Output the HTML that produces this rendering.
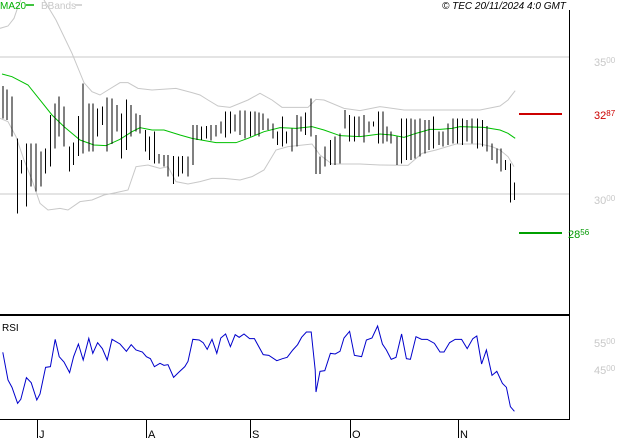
<!DOCTYPE html>
<html><head><style>
body{margin:0;background:#fff;width:627px;height:440px;overflow:hidden;font-family:"Liberation Sans",sans-serif}
svg{display:block}
</style></head><body>
<svg width="627" height="440" viewBox="0 0 627 440">
<rect width="627" height="440" fill="#fff"/>
<line x1="0" y1="57" x2="569" y2="57" stroke="#c8c8c8"/>
<line x1="0" y1="194" x2="569" y2="194" stroke="#c8c8c8"/>
<g transform="scale(0.4,0.33333)" fill="none">
<polyline vector-effect="non-scaling-stroke" stroke="#c8c8c8" points="0,85 20,78 35,55 45,20 52,0"/>
<polyline vector-effect="non-scaling-stroke" stroke="#c8c8c8" points="110,0 140,60 180,160 210,248 230,275 250,285 270,270 300,248 320,248 345,265 380,270 440,265 480,278 500,285 520,300 545,318 575,322 620,300 650,280 680,300 705,322 770,322 790,298 810,300 860,325 900,332 950,320 1010,330 1070,330 1130,330 1200,330 1250,318 1270,300 1288,272"/>
<polyline vector-effect="non-scaling-stroke" stroke="#c8c8c8" points="0,355 20,365 40,410 60,480 80,540 100,610 120,630 150,625 170,630 200,605 230,600 260,585 290,578 320,570 340,500 370,495 400,505 420,500 440,545 470,552 500,545 530,535 560,535 600,540 630,530 660,510 690,450 720,440 780,432 800,465 830,492 900,492 950,495 1020,496 1055,460 1090,450 1140,432 1200,432 1230,440 1250,450 1270,470 1285,500"/>
<polyline vector-effect="non-scaling-stroke" stroke="#00c000" points="5,222 30,230 70,255 100,300 130,345 160,380 200,420 235,435 265,437 300,418 330,395 350,383 380,390 410,390 450,405 480,415 540,428 590,428 620,415 660,395 700,383 740,385 780,380 810,390 850,407 900,410 950,402 980,405 1010,412 1040,400 1075,388 1100,388 1130,385 1150,380 1210,382 1250,390 1270,400 1288,415"/>
<path vector-effect="non-scaling-stroke" shape-rendering="crispEdges" stroke="#000" d="M8 258V355M18 268V360M30 290V410M44 415V640M54 480V520M66 430V620M78 430V560M90 430V575M102 455V560M114 445V520M126 345V500M138 310V445M148 290V410M160 320V440M174 440V515M184 428V495M196 348V468M208 250V460M222 310V455M232 310V455M244 325V410M256 320V375M268 292V455M280 295V432M292 315V395M304 340V475M316 298V450M328 315V410M340 340V395M350 345V400M364 390V455M374 410V480M386 395V490M398 462V490M410 465V500M420 465V530M434 468V552M446 470V530M456 468V520M470 470V530M482 375V495M492 375V420M504 380V420M516 378V415M528 375V422M540 375V410M552 365V400M564 335V412M576 335V400M588 343V395M600 332V405M612 332V415M626 335V410M638 335V405M648 338V410M658 340V390M670 355V390M682 370V415M694 395V435M706 350V440M716 395V430M730 385V455M742 345V440M752 350V395M764 338V405M778 296V410M790 405V522M800 470V522M812 440V500M826 420V495M838 410V495M850 400V490M862 330V385M874 345V425M886 350V425M898 350V410M910 345V428M922 365V398M934 365V380M946 335V430M958 335V430M968 380V425M978 395V430M992 410V495M1004 355V490M1016 355V480M1028 355V480M1038 358V475M1050 355V470M1062 360V460M1072 360V450M1084 350V445M1098 395V435M1108 395V440M1120 370V435M1132 355V430M1144 355V430M1156 355V435M1168 360V425M1180 355V430M1194 355V445M1206 360V440M1218 378V455M1230 430V480M1242 445V490M1252 445V515M1264 480V510M1276 490V608M1286 548V600"/>
</g>
<line x1="519" y1="114" x2="562" y2="114" stroke="#cc0000" stroke-width="2"/>
<line x1="519" y1="233" x2="562" y2="233" stroke="#00a000" stroke-width="2"/>
<line x1="569.5" y1="10" x2="569.5" y2="420" stroke="#000"/>
<line x1="0" y1="315" x2="569" y2="315" stroke="#000" stroke-width="2"/>
<line x1="0" y1="419.5" x2="570" y2="419.5" stroke="#000"/>
<g transform="translate(0,300) scale(0.4,0.33333)" fill="none">
<polyline vector-effect="non-scaling-stroke" stroke="#0000cc" points="7,157 20,240 30,262 44,310 52,298 66,233 78,248 92,300 100,282 114,202 126,200 138,118 148,170 160,186 174,218 184,170 196,132 208,180 222,115 232,160 244,128 256,146 268,180 280,118 300,132 316,154 328,134 340,150 356,156 366,170 376,176 386,200 400,190 410,196 420,194 434,232 446,218 462,200 470,184 482,118 498,120 508,128 518,148 530,118 542,160 552,114 564,102 576,140 588,104 598,112 610,102 624,116 636,116 658,164 672,166 692,182 706,176 718,172 732,150 744,134 754,112 766,96 778,96 788,210 790,276 800,214 812,212 826,160 838,162 850,154 860,114 874,94 886,166 904,170 916,120 930,114 944,78 956,132 966,150 978,178 990,172 1004,102 1016,176 1026,178 1040,110 1054,118 1068,118 1086,130 1100,156 1110,156 1124,128 1138,118 1154,118 1168,146 1182,116 1192,108 1204,192 1216,150 1230,226 1242,214 1256,250 1266,262 1276,320 1286,334"/>
</g>
<g stroke="#000" shape-rendering="crispEdges">
<line x1="37.5" y1="419" x2="37.5" y2="438"/><line x1="146.5" y1="419" x2="146.5" y2="438"/><line x1="250.5" y1="419" x2="250.5" y2="438"/><line x1="350.5" y1="419" x2="350.5" y2="438"/><line x1="458.5" y1="419" x2="458.5" y2="438"/>
</g>
<g font-size="11" fill="#000">
<text x="39" y="438">J</text><text x="148" y="438">A</text><text x="252" y="438">S</text><text x="352" y="438">O</text><text x="460" y="438">N</text>
<text x="2" y="331" font-size="10">RSI</text>
</g>
<g font-size="11" fill="#c8c8c8">
<text x="594" y="66">35<tspan font-size="8" dy="-3">00</tspan></text>
<text x="594" y="204">30<tspan font-size="8" dy="-3">00</tspan></text>
<text x="594" y="347">55<tspan font-size="8" dy="-3">00</tspan></text>
<text x="594" y="374">45<tspan font-size="8" dy="-3">00</tspan></text>
</g>
<text x="594" y="119" font-size="11" fill="#cc0000">32<tspan font-size="8" dy="-3">87</tspan></text>
<text x="568" y="238" font-size="11" fill="#009900">28<tspan font-size="8" dy="-3">56</tspan></text>
<text x="0" y="9" font-size="10" fill="#00b000">MA20</text>
<line x1="26" y1="5" x2="34" y2="5" stroke="#00b000" stroke-width="1.5"/>
<text x="41" y="9" font-size="10" fill="#c8c8c8">BBands</text>
<line x1="75" y1="5" x2="82" y2="5" stroke="#c8c8c8" stroke-width="1.5"/>
<text x="442" y="9" font-size="10" font-style="italic" fill="#000">© TEC 20/11/2024 4:0 GMT</text>
</svg>
</body></html>
